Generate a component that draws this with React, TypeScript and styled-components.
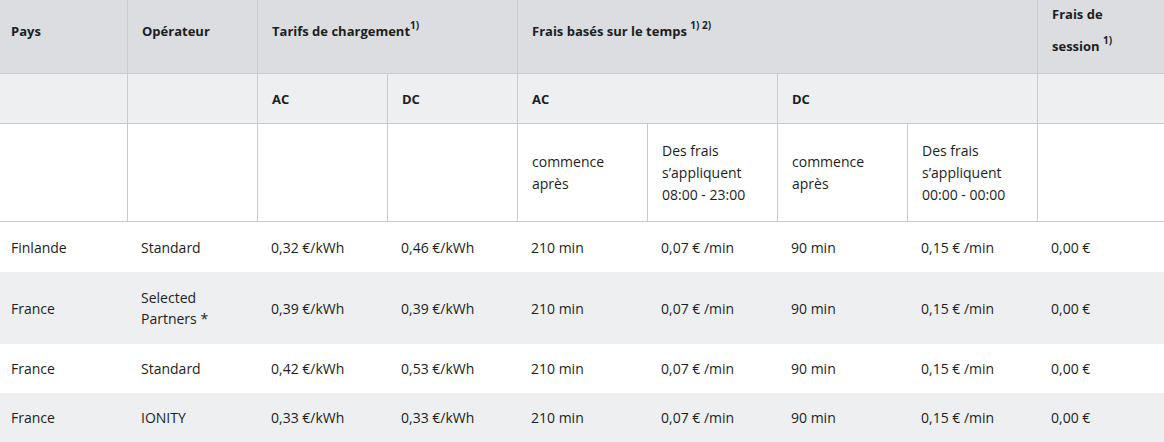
import React from 'react';
import styled, { createGlobalStyle } from 'styled-components';

const GlobalStyle = createGlobalStyle`
  html, body {
    margin: 0;
    padding: 0;
    background: #ffffff;
  }
  body {
    font-family: 'Open Sans', 'Liberation Sans', sans-serif;
    color: #1b1e23;
    -webkit-font-smoothing: antialiased;
  }
`;

const COLS = '128px repeat(7, 130px) 1fr';
const LINE = '#c9cacd';

const Table = styled.div`
  width: 1164px;
  display: flex;
  flex-direction: column;
`;

const Row = styled.div<{ $height: number; $bg: string }>`
  display: grid;
  grid-template-columns: ${COLS};
  height: ${(p) => p.$height}px;
  background: ${(p) => p.$bg};
`;

const HeadCell = styled.div<{ $span?: number; $last?: boolean; $first?: boolean; $tight?: boolean }>`
  grid-column: span ${(p) => p.$span || 1};
  box-sizing: border-box;
  border-bottom: 1px solid ${LINE};
  border-right: ${(p) => (p.$last ? 'none' : `1px solid ${LINE}`)};
  padding: ${(p) => (p.$tight ? '0' : '15px')} 12px 0 ${(p) => (p.$first ? '11px' : '14px')};
  font-size: 13px;
  font-weight: 700;
  line-height: 32px;
  & > span {
    display: block;
    margin-top: ${(p) => (p.$tight ? '-2px' : '0')};
  }
`;

const SubHeadCell = styled.div<{ $span?: number; $last?: boolean; $first?: boolean }>`
  grid-column: span ${(p) => p.$span || 1};
  box-sizing: border-box;
  border-bottom: 1px solid ${LINE};
  border-right: ${(p) => (p.$last ? 'none' : `1px solid ${LINE}`)};
  display: flex;
  align-items: center;
  padding: 0 12px 0 ${(p) => (p.$first ? '11px' : '14px')};
  font-size: 13px;
  font-weight: 700;
`;

const NoteCell = styled.div<{ $last?: boolean }>`
  box-sizing: border-box;
  border-bottom: 1px solid ${LINE};
  border-right: ${(p) => (p.$last ? 'none' : `1px solid ${LINE}`)};
  display: flex;
  flex-direction: column;
  justify-content: center;
  padding: 0 10px 0 14px;
  font-size: 14px;
  line-height: 22px;
`;

const Cell = styled.div<{ $first?: boolean }>`
  display: flex;
  flex-direction: column;
  justify-content: center;
  padding: 0 10px 0 ${(p) => (p.$first ? '11px' : '13px')};
  font-size: 14px;
  line-height: 21px;
`;

const Sup = styled.sup`
  font-size: 10px;
  line-height: 0;
  vertical-align: 7px;
`;

type Line = {
  country: string;
  operator: string[];
  ac: string;
  dc: string;
  height: number;
};

const lines: Line[] = [
  { country: 'Finlande', operator: ['Standard'], ac: '0,32 €/kWh', dc: '0,46 €/kWh', height: 50 },
  { country: 'France', operator: ['Selected', 'Partners *'], ac: '0,39 €/kWh', dc: '0,39 €/kWh', height: 72 },
  { country: 'France', operator: ['Standard'], ac: '0,42 €/kWh', dc: '0,53 €/kWh', height: 49 },
  { country: 'France', operator: ['IONITY'], ac: '0,33 €/kWh', dc: '0,33 €/kWh', height: 49 },
];

export default function App() {
  return (
    <>
      <GlobalStyle />
      <Table>
        <Row $height={74} $bg="#dcdde0">
          <HeadCell $first>Pays</HeadCell>
          <HeadCell>Opérateur</HeadCell>
          <HeadCell $span={2}>
            Tarifs de chargement<Sup>1)</Sup>
          </HeadCell>
          <HeadCell $span={4}>
            Frais basés sur le temps <Sup>1) 2)</Sup>
          </HeadCell>
          <HeadCell $last $tight>
            <span>
              Frais de
              <br />
              session <Sup>1)</Sup>
            </span>
          </HeadCell>
        </Row>
        <Row $height={50} $bg="#eeeff1">
          <SubHeadCell $first />
          <SubHeadCell />
          <SubHeadCell>AC</SubHeadCell>
          <SubHeadCell>DC</SubHeadCell>
          <SubHeadCell $span={2}>AC</SubHeadCell>
          <SubHeadCell $span={2}>DC</SubHeadCell>
          <SubHeadCell $last />
        </Row>
        <Row $height={98} $bg="#ffffff">
          <NoteCell />
          <NoteCell />
          <NoteCell />
          <NoteCell />
          <NoteCell>
            <div>commence</div>
            <div>après</div>
          </NoteCell>
          <NoteCell>
            <div>Des frais</div>
            <div>s’appliquent</div>
            <div>08:00 - 23:00</div>
          </NoteCell>
          <NoteCell>
            <div>commence</div>
            <div>après</div>
          </NoteCell>
          <NoteCell>
            <div>Des frais</div>
            <div>s’appliquent</div>
            <div>00:00 - 00:00</div>
          </NoteCell>
          <NoteCell $last />
        </Row>
        {lines.map((l, i) => (
          <Row key={i} $height={l.height} $bg={i % 2 === 1 ? '#eeeff1' : '#ffffff'}>
            <Cell $first>{l.country}</Cell>
            <Cell>
              {l.operator.map((o) => (
                <div key={o}>{o}</div>
              ))}
            </Cell>
            <Cell>{l.ac}</Cell>
            <Cell>{l.dc}</Cell>
            <Cell>210 min</Cell>
            <Cell>0,07 € /min</Cell>
            <Cell>90 min</Cell>
            <Cell>0,15 € /min</Cell>
            <Cell>0,00 €</Cell>
          </Row>
        ))}
      </Table>
    </>
  );
}
